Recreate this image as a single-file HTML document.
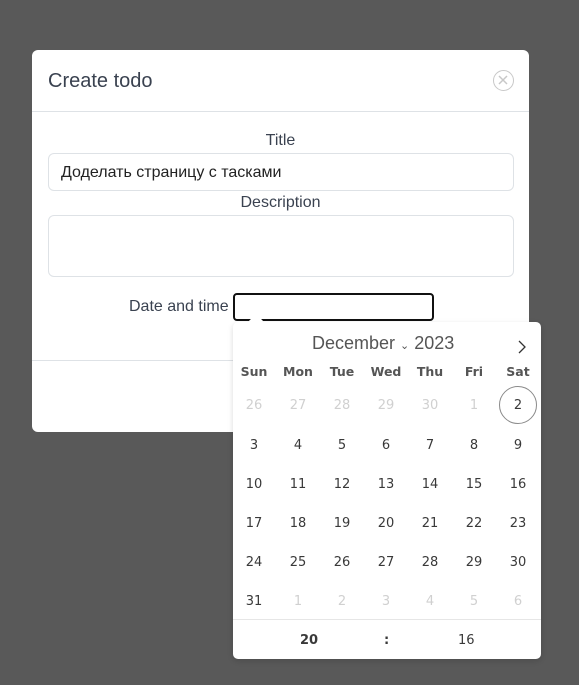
<!DOCTYPE html>
<html><head><meta charset="utf-8"><style>
*{box-sizing:border-box;margin:0;padding:0}
body{width:579px;height:685px;background:#595959;font-family:"Liberation Sans","Noto Sans CJK SC",sans-serif;position:relative;overflow:hidden}
.modal{position:absolute;left:32px;top:50px;width:497px;height:382px;background:#fff;border-radius:6px}
.hdr{height:62px;border-bottom:1px solid #dee2e6;position:relative}
.hdr h1{position:absolute;left:16px;top:20px;font-size:20px;font-weight:normal;color:#3a4250}
.close{position:absolute;left:461px;top:20px;width:21px;height:21px;border:1.5px solid #c8c8c8;border-radius:50%}
.lbl{position:absolute;width:100%;text-align:center;font-size:16px;color:#3a4250}
.inp{position:absolute;left:16px;width:466px;border:1px solid #dee2e6;border-radius:6px;background:#fff}
.foot{position:absolute;left:0;top:310px;width:100%;border-top:1px solid #dee2e6}
.dt{position:absolute;left:201px;top:243px;width:201px;height:28px;border:2px solid #111;border-radius:4px}
.cal{position:absolute;left:233px;top:322px;width:308px;height:337px;background:#fff;border-radius:5px;box-shadow:0 2px 6px rgba(0,0,0,.15);font-family:"DejaVu Sans","Liberation Sans",sans-serif}
.d{position:absolute;width:40px;text-align:center;font-size:13px;color:#393939;transform:translateX(-20px)}
.g{color:#d0d0d0}
.w{font-weight:bold;color:#555;font-size:12.5px}
</style></head><body>
<div class="modal">
 <div class="hdr"><h1>Create todo</h1><div class="close"><svg width="18" height="18" viewBox="0 0 18 18" style="position:absolute;left:0;top:0"><path d="M5 5L13 13M13 5L5 13" stroke="#c8c8c8" stroke-width="1.5"/></svg></div></div>
 <div class="lbl" style="top:82px">Title</div>
 <div class="inp" style="top:103px;height:38px;padding:10px 12px;font-size:16px;color:#222">Доделать страницу с тасками</div>
 <div class="lbl" style="top:144px">Description</div>
 <div class="inp" style="top:165px;height:62px"></div>
 <div style="position:absolute;left:97px;top:248px;font-size:16px;color:#3a4250">Date and time</div>
 <div class="dt"></div>
 <div class="foot"></div>
</div>
<div class="cal">
 <div style="position:absolute;left:18px;top:-6px;width:10px;height:10px;background:#fff;transform:rotate(45deg)"></div>
 <div style="position:absolute;left:79px;top:11px;font-size:18px;color:#555;font-family:'Liberation Sans',sans-serif">December <span style="font-size:11px">⌄</span> 2023</div>
 <svg style="position:absolute;left:284px;top:18px" width="10" height="14"><path d="M2 1L8 7L2 13" fill="none" stroke="#333" stroke-width="1.3"/></svg>
 <div style="position:absolute;left:0;top:297px;width:100%;border-top:1px solid #e6e6e6"></div>
 <div style="position:absolute;left:67px;top:311px;font-size:13px;font-weight:bold;color:#393939">20</div>
 <div style="position:absolute;left:151px;top:311px;font-size:13px;font-weight:bold;color:#393939">:</div>
 <div style="position:absolute;left:225px;top:311px;font-size:13px;color:#393939">16</div>
 <div style="position:absolute;left:266px;top:64px;width:38px;height:38px;border:1px solid #8a8a8a;border-radius:50%"></div>
 <div id="g"></div>
</div>
<script>
var c=[21,65,109,153,197,241,285],g=document.getElementById('g'),h='';
['Sun','Mon','Tue','Wed','Thu','Fri','Sat'].forEach(function(t,i){h+='<div class="d w" style="left:'+c[i]+'px;top:42px">'+t+'</div>'});
var days=[26,27,28,29,30,1,2];for(var i=3;i<=31;i++)days.push(i);days.push(1,2,3,4,5,6);
var ys=[76,116,155,194,233,272];
days.forEach(function(d,k){var r=Math.floor(k/7),col=k%7;var gr=(r==0&&col<6)||(r==5&&col>0);h+='<div class="d'+(gr?' g':'')+'" style="left:'+c[col]+'px;top:'+ys[r]+'px">'+d+'</div>'});
g.innerHTML=h;
</script>
</body></html>
